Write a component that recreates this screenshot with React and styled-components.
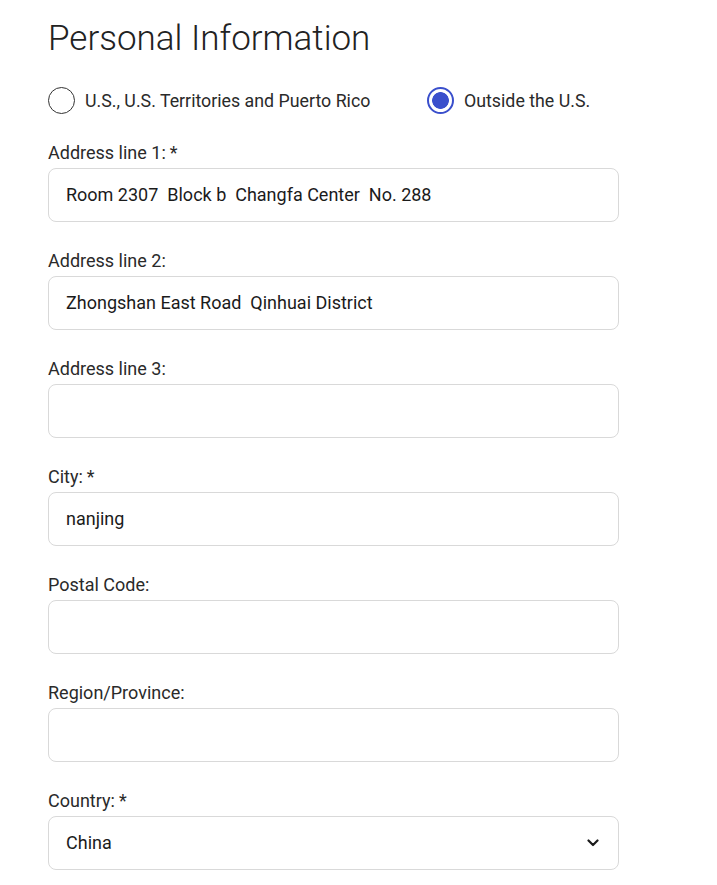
import React from "react";
import styled, { createGlobalStyle } from "styled-components";

const GlobalStyle = createGlobalStyle`
  html, body {
    margin: 0;
    padding: 0;
    background: #ffffff;
  }
  body {
    font-family: Roboto, "Liberation Sans", Arial, sans-serif;
    color: #212121;
  }
`;

const fields = [
  { label: "Address line 1:", required: true, value: "Room 2307  Block b  Changfa Center  No. 288" },
  { label: "Address line 2:", value: "Zhongshan East Road  Qinhuai District" },
  { label: "Address line 3:", value: "" },
  { label: "City:", required: true, value: "nanjing" },
  { label: "Postal Code:", value: "" },
  { label: "Region/Province:", value: "" },
];

function App() {
  return (
    <>
      <GlobalStyle />
      <Page>
        <Title>Personal Information</Title>
        <RadioRow>
          <RadioOption>
            <RadioCircle />
            <RadioLabel>U.S., U.S. Territories and Puerto Rico</RadioLabel>
          </RadioOption>
          <RadioOption>
            <RadioCircle checked />
            <RadioLabel>Outside the U.S.</RadioLabel>
          </RadioOption>
        </RadioRow>
        {fields.map((f) => (
          <Field key={f.label}>
            <Label>
              {f.label}
              {f.required ? <Star>*</Star> : null}
            </Label>
            <Input>{f.value}</Input>
          </Field>
        ))}
        <Field>
          <Label>
            Country:<Star>*</Star>
          </Label>
          <Input>
            China
            <Chevron viewBox="0 0 12 8">
              <path d="M1.5 1.5 L6 6 L10.5 1.5" fill="none" stroke="#1b1b1b" strokeWidth="2.2" strokeLinecap="round" strokeLinejoin="round" />
            </Chevron>
          </Input>
        </Field>
      </Page>
    </>
  );
}

const Page = styled.div`
  width: 571px;
  padding: 15px 0 0 48px;
`;

const Title = styled.h1`
  margin: 0;
  font-size: 35px;
  font-weight: 300;
  line-height: 48px;
  color: #222;
`;

const RadioRow = styled.div`
  display: flex;
  margin-top: 23px;
  height: 28px;
  align-items: center;
`;

const RadioOption = styled.div`
  display: flex;
  align-items: center;
  gap: 10px;
  width: 379px;
  &:last-child {
    width: auto;
  }
`;

const RadioCircle = styled.span`
  box-sizing: border-box;
  width: 27px;
  height: 27px;
  border-radius: 50%;
  border: ${(p) => (p.checked ? "2.5px solid #3a4fcc" : "1.5px solid #333")};
  background: ${(p) => (p.checked ? "radial-gradient(circle, #3a4fcc 0 8px, #fff 8.7px)" : "#fff")};
`;

const RadioLabel = styled.span`
  font-size: 17.8px;
  color: #2a2a2a;
`;

const Field = styled.div`
  display: flex;
  flex-direction: column;
  margin-top: 28px;
`;

const Label = styled.div`
  font-size: 18px;
  line-height: 22px;
  color: #2a2a2a;
  margin-bottom: 4px;
`;

const Star = styled.span`
  margin-left: 4px;
`;

const Input = styled.div`
  box-sizing: border-box;
  height: 54px;
  border: 1px solid #d9d9d9;
  border-radius: 8px;
  padding: 0 17px 2px;
  display: flex;
  align-items: center;
  justify-content: space-between;
  font-size: 18px;
  color: #1b1b1b;
  white-space: pre;
`;

const Chevron = styled.svg`
  width: 12px;
  height: 8px;
  margin: 2px 2px 0 0;
`;

export default App;
